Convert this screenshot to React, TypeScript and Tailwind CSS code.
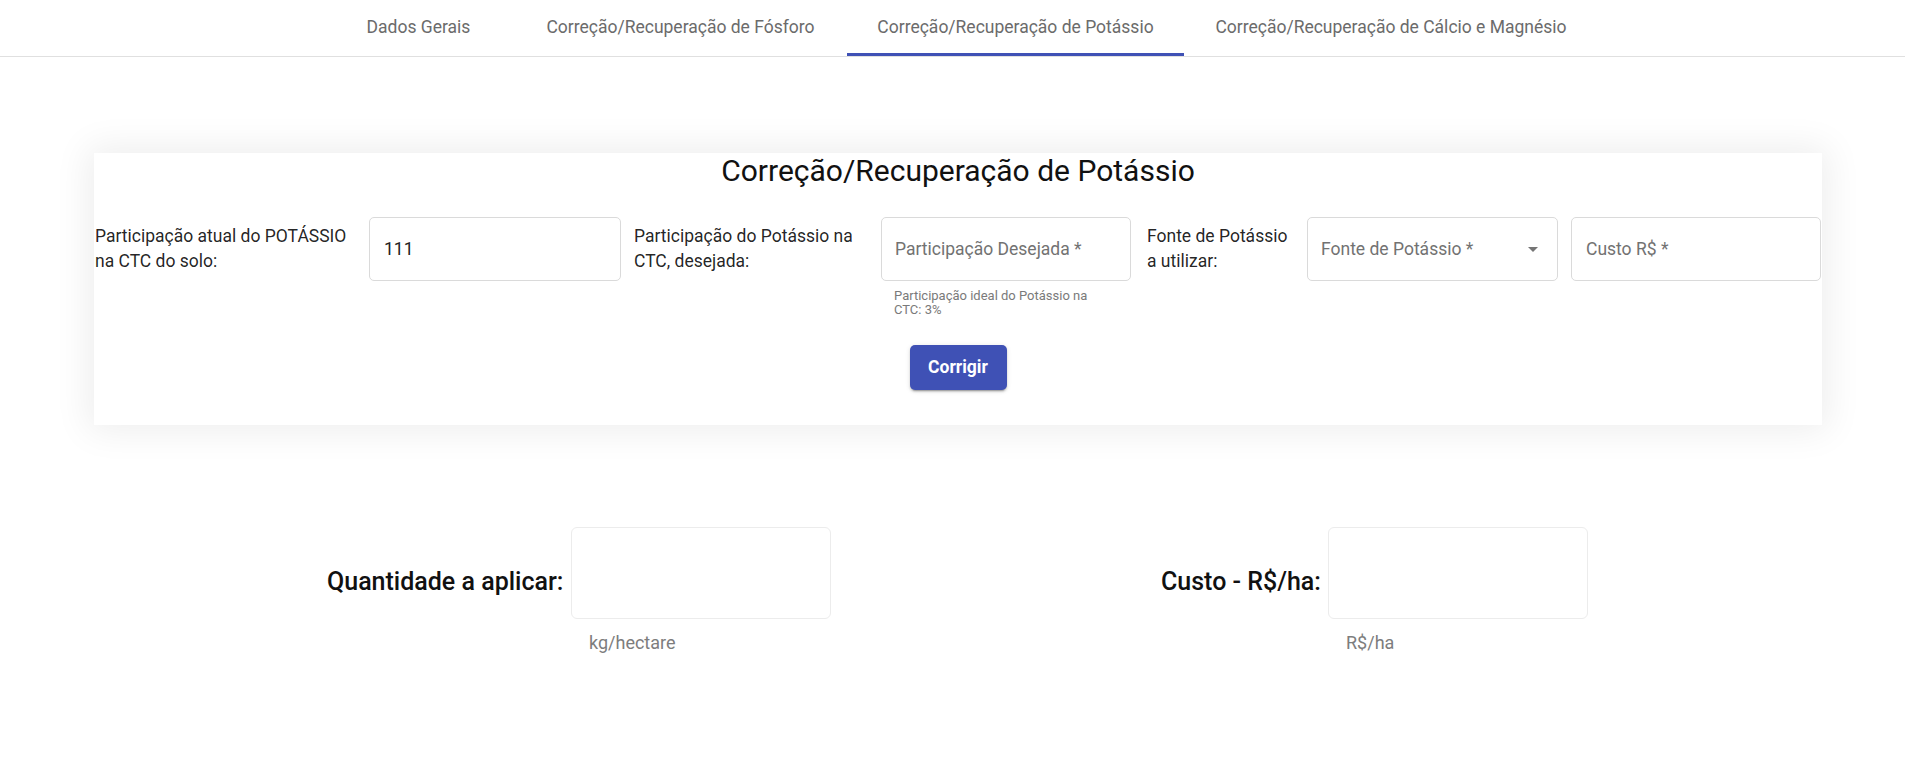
import React from "react";

const tabs = [
  { label: "Dados Gerais", w: "w-[191px]", active: false },
  { label: "Correção/Recuperação de Fósforo", w: "w-[333px]", active: false },
  { label: "Correção/Recuperação de Potássio", w: "w-[337px]", active: true },
  { label: "Correção/Recuperação de Cálcio e Magnésio", w: "w-[414px]", active: false },
];

export default function App() {
  return (
    <div className="min-h-[784px] bg-white font-['Roboto',sans-serif] text-[rgba(0,0,0,0.87)]">
      {/* Tabs */}
      <div className="flex h-[57px] border-b border-[#e0e0e0] pl-[323px]">
        {tabs.map((t) => (
          <div
            key={t.label}
            className={`relative flex h-[56px] items-center justify-center pb-[1px] text-[17.5px] text-[#6b6b6b] ${t.w}`}
          >
            <span className="whitespace-nowrap">{t.label}</span>
            {t.active && <div className="absolute bottom-0 left-0 right-0 h-[3px] bg-[#3f51b5]" />}
          </div>
        ))}
      </div>

      {/* Card */}
      <div className="ml-[94px] mt-[96px] w-[1728px] bg-white pb-[35px] shadow-[0_0_34px_6px_rgba(0,0,0,0.07)]">
        <h1 className="mt-[2px] h-[36px] text-center text-[30px] font-normal leading-[36px] text-[#111]">
          Correção/Recuperação de Potássio
        </h1>

        <div className="mt-[28px] flex items-start">
          <div className="ml-[1px] flex h-[64px] w-[274px] items-center text-[17.5px] leading-[25px]">
            <span>
              Participação atual do POTÁSSIO
              <br />
              na CTC do solo:
            </span>
          </div>
          <div className="flex h-[64px] w-[252px] items-center rounded-[5px] border border-[#dadada] px-[14px] text-[17.5px] text-[#222]">
            111
          </div>
          <div className="flex h-[64px] w-[260px] items-center pl-[13px] text-[17.5px] leading-[25px]">
            <span>
              Participação do Potássio na
              <br />
              CTC, desejada:
            </span>
          </div>
          <div className="flex w-[250px] flex-col">
            <div className="flex h-[64px] items-center rounded-[5px] border border-[#dadada] px-[13px] text-[17.5px] text-[#727272]">
              Participação Desejada *
            </div>
            <div className="mt-[8px] px-[13px] text-[13px] leading-[14px] text-[#7a7a7a]">
              Participação ideal do Potássio na
              <br />
              CTC: 3%
            </div>
          </div>
          <div className="flex h-[64px] w-[176px] items-center pl-[16px] text-[17.5px] leading-[25px]">
            <span>
              Fonte de Potássio
              <br />a utilizar:
            </span>
          </div>
          <div className="flex h-[64px] w-[251px] items-center justify-between rounded-[5px] border border-[#dadada] pl-[13px] pr-[19px] text-[17.5px] text-[#727272]">
            <span>Fonte de Potássio *</span>
            <svg width="10" height="5" viewBox="0 0 10 5">
              <path d="M0 0 L10 0 L5 5 Z" fill="#757575" />
            </svg>
          </div>
          <div className="ml-[13px] flex h-[64px] w-[250px] items-center rounded-[5px] border border-[#dadada] px-[14px] text-[17.5px] text-[#727272]">
            Custo R$ *
          </div>
        </div>

        <div className="mt-[28px] flex justify-center">
          <button className="h-[45px] w-[97px] rounded-[5px] bg-[#3f51b5] text-[17.5px] font-bold text-white shadow-[0_3px_1px_-2px_rgba(0,0,0,0.2),0_2px_2px_0_rgba(0,0,0,0.14),0_1px_5px_0_rgba(0,0,0,0.12)]">
            Corrigir
          </button>
        </div>
      </div>

      {/* Results */}
      <div className="mt-[102px] flex items-start pl-[327px]">
        <div className="flex items-start">
          <div className="w-[244px] whitespace-nowrap pr-[9px] pt-[40px] text-right text-[25px] font-medium leading-[30px] text-[#111]">
            Quantidade a aplicar:
          </div>
          <div className="flex w-[260px] flex-col">
            <div className="h-[92px] rounded-[6px] border border-[#ececec]" />
            <div className="mt-[12px] pl-[18px] text-[18px] leading-[24px] text-[#7d7d7d]">kg/hectare</div>
          </div>
        </div>
        <div className="ml-[330px] flex items-start">
          <div className="w-[167px] whitespace-nowrap pr-[8px] pt-[40px] text-right text-[25px] font-medium leading-[30px] text-[#111]">
            Custo - R$/ha:
          </div>
          <div className="flex w-[260px] flex-col">
            <div className="h-[92px] rounded-[6px] border border-[#ececec]" />
            <div className="mt-[12px] pl-[18px] text-[18px] leading-[24px] text-[#7d7d7d]">R$/ha</div>
          </div>
        </div>
      </div>
    </div>
  );
}
